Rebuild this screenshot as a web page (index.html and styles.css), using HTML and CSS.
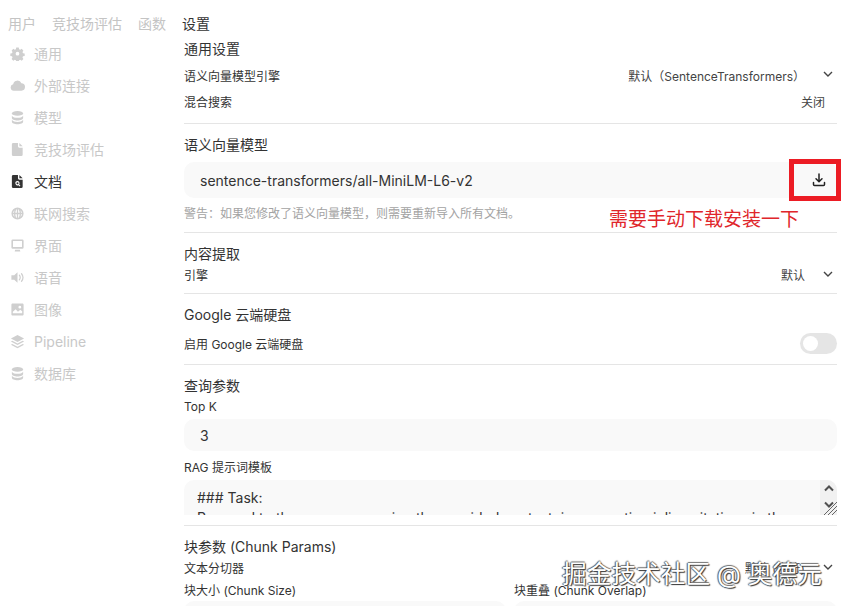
FILE: index.html
```html
<!DOCTYPE html>
<html lang="zh">
<head>
<meta charset="utf-8">
<title>设置</title>
<link rel="stylesheet" href="styles.css">
</head>
<body>
<div class="page">
  <nav class="tabs">
    <span class="tab">用户</span><span class="tab">竞技场评估</span><span class="tab">函数</span><span class="tab active">设置</span>
  </nav>
  <div class="body">
    <aside class="side">
      <div class="item"><svg class="ico" viewBox="0 0 16 16"><path fill-rule="evenodd" d="M6.500 1h3l.4 2 1.300.6 1.800-1.100 2 2.100-1.100 1.700.6 1.300 2 .4v3l-2 .4-.6 1.300 1.100 1.700-2 2.100-1.800-1.100-1.300.6-.4 2h-3l-.4-2-1.300-.6-1.800 1.100-2-2.100 1.100-1.700-.6-1.300-2-.4v-3l2-.4.6-1.300-1.100-1.700 2-2.100 1.800 1.100 1.300-.6zM8 6a2.200 2.200 0 1 0 0 4.400A2.200 2.200 0 0 0 8 6z" transform="translate(.8 .8) scale(.9)"/></svg><span>通用</span></div>
      <div class="item"><svg class="ico" viewBox="0 0 16 16"><path d="M4 13.500a3.500 3.500 0 0 1-.6-6.900 4.600 4.600 0 0 1 8.800-.9A3.900 3.900 0 0 1 12 13.500z"/></svg><span>外部连接</span></div>
      <div class="item"><svg class="ico" viewBox="0 0 16 16"><ellipse cx="8" cy="3.600" rx="6" ry="2.600"/><path d="M2 6c1 1.600 3.400 2.300 6 2.300S13 7.600 14 6v2.500c0 1.500-2.700 2.700-6 2.700S2 10 2 8.500zM2 10.500c1 1.600 3.400 2.300 6 2.300s5-.7 6-2.300V12.500c0 1.500-2.700 2.700-6 2.700s-6-1.200-6-2.700z"/></svg><span>模型</span></div>
      <div class="item"><svg class="ico" viewBox="0 0 16 16"><path d="M3.500 1h5v3.500a1.500 1.500 0 0 0 1.500 1.500h3.500v7.500A1.500 1.500 0 0 1 12 15H3.500A1.500 1.500 0 0 1 2 13.500v-11A1.500 1.500 0 0 1 3.500 1z"/><path d="M10 1l3.500 3.500H10z"/></svg><span>竞技场评估</span></div>
      <div class="item current"><svg class="ico" viewBox="0 0 16 16"><path fill-rule="evenodd" d="M3.500 1h5v3.500a1.500 1.500 0 0 0 1.500 1.500h3.500v7.500A1.500 1.500 0 0 1 12 15H3.500A1.500 1.500 0 0 1 2 13.500v-11A1.500 1.500 0 0 1 3.500 1zM8 7.500a2.300 2.300 0 1 0 1 4.400l1.300 1.300.8-.8-1.300-1.300A2.300 2.300 0 0 0 8 7.500zm0 1.200a1.100 1.100 0 1 1 0 2.200 1.100 1.100 0 0 1 0-2.200z"/><path d="M10 1l3.500 3.500H10z"/></svg><span>文档</span></div>
      <div class="item"><svg class="ico" viewBox="0 0 16 16"><path fill-rule="evenodd" d="M8 1.500a6.500 6.500 0 1 1 0 13 6.500 6.500 0 0 1 0-13zM7.300 3.200C6.300 4 5.800 5.700 5.700 7.300h1.600zM8.700 3.200v4.100h1.600c-.1-1.600-.6-3.300-1.600-4.100zM5.700 8.700c.1 1.600.6 3.300 1.600 4.100V8.700zM8.700 8.700v4.100c1-.8 1.500-2.500 1.600-4.100zM4.300 7.300c0-1 .2-2 .6-2.800a5 5 0 0 0-1.700 2.800zM11.700 7.300h1.100a5 5 0 0 0-1.700-2.800c.4.800.6 1.800.6 2.800zM3.200 8.700a5 5 0 0 0 1.700 2.800c-.4-.8-.6-1.800-.6-2.800zM12.800 8.700h-1.100c0 1-.2 2-.6 2.800a5 5 0 0 0 1.700-2.800z"/></svg><span>联网搜索</span></div>
      <div class="item"><svg class="ico" viewBox="0 0 16 16"><path fill-rule="evenodd" d="M3 1.500h10A1.500 1.500 0 0 1 14.500 3v7a1.500 1.500 0 0 1-1.500 1.500H3A1.500 1.500 0 0 1 1.500 10V3A1.500 1.500 0 0 1 3 1.500zm.2 1.700v6.500h9.600V3.200z"/><path d="M5.500 12.500h5l.5 2H5z"/></svg><span>界面</span></div>
      <div class="item"><svg class="ico" viewBox="0 0 16 16"><path d="M8 2.500v11L4.500 10.500H1.500v-5h3z"/><path d="M10 5.500c1 1.400 1 3.600 0 5M12.300 4c1.800 2.300 1.800 5.700 0 8" fill="none" stroke="currentColor" stroke-width="1.300" stroke-linecap="round"/></svg><span>语音</span></div>
      <div class="item"><svg class="ico" viewBox="0 0 16 16"><path fill-rule="evenodd" d="M2.800 1.500h10.400c.7 0 1.300.6 1.300 1.300v10.400c0 .7-.6 1.300-1.300 1.300H2.800c-.7 0-1.300-.6-1.300-1.300V2.800c0-.7.600-1.300 1.300-1.300zM10.500 4a1.500 1.500 0 1 0 0 3 1.500 1.500 0 0 0 0-3zM3 10.500v1.500h10V9.800l-2-1.500-2.500 2-2.500-2.600z"/></svg><span>图像</span></div>
      <div class="item"><svg class="ico" viewBox="0 0 16 16"><path d="M8 1l7 3.700-7 3.700-7-3.700z"/><path d="M2.500 7.300L8 10.200l5.500-2.900L15 8l-7 3.700L1 8z"/><path d="M2.500 10.600L8 13.500l5.500-2.900 1.500.8L8 15.100 1 11.400z"/></svg><span>Pipeline</span></div>
      <div class="item"><svg class="ico" viewBox="0 0 16 16"><ellipse cx="8" cy="3.600" rx="6" ry="2.600"/><path d="M2 6c1 1.600 3.400 2.300 6 2.300S13 7.600 14 6v2.500c0 1.500-2.700 2.700-6 2.700S2 10 2 8.500zM2 10.500c1 1.600 3.400 2.300 6 2.300s5-.7 6-2.300V12.500c0 1.500-2.700 2.700-6 2.700s-6-1.200-6-2.700z"/></svg><span>数据库</span></div>
    </aside>
    <main class="main">
      <section class="sec first">
        <h3>通用设置</h3>
        <div class="row h26"><span>语义向量模型引擎</span><span class="val">默认（SentenceTransformers）<svg class="chev" viewBox="0 0 12 12"><path d="M2 4l4 4 4-4"/></svg></span></div>
        <div class="row h26"><span>混合搜索</span><span class="val plain">关闭</span></div>
      </section>
      <section class="sec model">
        <h3>语义向量模型</h3>
        <div class="field big"><span>sentence-transformers/all-MiniLM-L6-v2</span><svg class="dl" viewBox="0 0 16 16"><path d="M8 2v7.500M5 6.800l3 3 3-3"/><path d="M2.500 10.500v2a1 1 0 0 0 1 1h9a1 1 0 0 0 1-1v-2"/></svg></div>
        <p class="warn">警告：如果您修改了语义向量模型，则需要重新导入所有文档。</p>
      </section>
      <section class="sec engine">
        <h3>内容提取</h3>
        <div class="row h21"><span>引擎</span><span class="val">默认<svg class="chev" viewBox="0 0 12 12"><path d="M2 4l4 4 4-4"/></svg></span></div>
      </section>
      <section class="sec">
        <h3>Google 云端硬盘</h3>
        <div class="row gdrive"><span>启用 Google 云端硬盘</span><span class="switch"><i></i></span></div>
      </section>
      <section class="sec params">
        <h3>查询参数</h3>
        <div class="lab">Top K</div>
        <div class="field num">3</div>
        <div class="lab rag">RAG 提示词模板</div>
        <div class="area">
          <div class="area-text">### Task:<br>Respond to the user query using the provided context, incorporating inline citations in the</div>
          <div class="spin"><svg viewBox="0 0 12 12"><path d="M2 7.500L6 3.500l4 4"/></svg><svg viewBox="0 0 12 12"><path d="M2 4.500l4 4 4-4"/></svg></div>
          <svg class="grip" viewBox="0 0 14 14"><path d="M14 1L1 14M14 5L5 14M14 9l-5 5"/></svg>
        </div>
      </section>
      <section class="sec chunk">
        <h3>块参数 (Chunk Params)</h3>
        <div class="row h21"><span>文本分切器</span><span class="val">默认 (字符)<svg class="chev" viewBox="0 0 12 12"><path d="M2 4l4 4 4-4"/></svg></span></div>
        <div class="cols">
          <div><div class="lab">块大小 (Chunk Size)</div><div class="field num"></div></div>
          <div><div class="lab">块重叠 (Chunk Overlap)</div><div class="field num"></div></div>
        </div>
      </section>
    </main>
  </div>
  <div class="redbox"></div>
  <div class="note">需要手动下载安装一下</div>
  <div class="mark">掘金技术社区 @ 奥德元</div>
</div>
</body>
</html>
```
FILE: styles.css
```css
* { box-sizing: border-box; }
html, body { margin: 0; padding: 0; background: #fff; }
body { font-family: Inter, "Noto Sans CJK SC", sans-serif; color: #333; }
.page { position: relative; width: 841px; height: 606px; overflow: hidden; }

.tabs { display: flex; gap: 16px; height: 37px; padding: 14px 0 0 8px; font-size: 14px; line-height: 20px; color: #c4c4c4; }
.tab.active { color: #333; }

.body { display: flex; }
.side { width: 184px; flex: none; padding-left: 10px; }
.item { display: flex; align-items: center; height: 32px; gap: 9px; font-size: 14px; color: #c8c8c8; }
.item.current { color: #333; }
.ico { width: 15px; height: 15px; fill: currentColor; color: #cfcfcf; flex: none; }
.item.current .ico { color: #333; }
.item span { white-space: nowrap; }

.main { width: 653px; flex: none; margin-top: -37px; padding-top: 38px; }
.sec { border-top: 1px solid #e5e5e5; padding-top: 11px; padding-bottom: 9px; }
.sec.first { border-top: 0; padding-top: 0; padding-bottom: 9px; margin-top: 1px; }
h3 { margin: 0; font-size: 14px; font-weight: 400; line-height: 20px; color: #333; }
.row { display: flex; justify-content: space-between; align-items: center; font-size: 12px; color: #333; }
.h26 { height: 26px; }
.first h3 + .row { margin-top: 3px; }
.h21 { height: 21px; }
.engine { padding-bottom: 8px; }
.val { display: flex; align-items: center; color: #444; }
.val.plain { padding-right: 12px; }
.chev { width: 12px; height: 12px; margin-left: 17px; margin-right: 3px; margin-top: -2px; fill: none; stroke: #444; stroke-width: 1.4; }

.model { padding-bottom: 10px; }
.field { background: #f9f9f9; border-radius: 10px; font-size: 14px; color: #333; }
.field.big { height: 36px; margin-top: 7px; padding: 1px 16px 0; display: flex; align-items: center; justify-content: space-between; }
.dl { position: relative; left: 6px; top: -1px; width: 16px; height: 16px; fill: none; stroke: #222; stroke-width: 1.5; stroke-linecap: round; stroke-linejoin: round; }
.warn { margin: 8px 0 0; font-size: 12px; line-height: 16px; color: #a3a3a3; white-space: nowrap; }

.gdrive { height: 24px; margin-top: 6px; }
.switch { display: block; width: 37px; height: 21px; border-radius: 11px; background: #e5e5e5; padding: 3px; }
.switch i { display: block; width: 15px; height: 15px; border-radius: 50%; background: #fff; }

.params { padding-bottom: 0; }
.lab { font-size: 12px; line-height: 18px; margin-top: 2px; color: #333; }
.field.num { height: 32px; margin-top: 3px; padding: 0 16px; line-height: 34px; }
.lab.rag { margin-top: 8px; }
.area { position: relative; height: 35px; margin-top: 3px; background: #f9f9f9; border-radius: 10px 10px 0 0; overflow: hidden; padding: 8px 16px 0 13px; font-size: 14px; line-height: 20px; }
.area-text { white-space: nowrap; width: 622px; overflow: hidden; }
.spin { position: absolute; right: 0; top: 0; width: 17px; height: 35px; background: #f1f1f1; display: flex; flex-direction: column; align-items: center; padding-top: 3px; gap: 3px; }
.spin svg { width: 12px; height: 12px; fill: none; stroke: #505050; stroke-width: 2; }
.grip { position: absolute; right: 0; bottom: 0; width: 14px; height: 14px; fill: none; stroke: #666; stroke-width: 1; }

.chunk { margin-top: 10px; padding-top: 11px; }
.cols { display: grid; grid-template-columns: 322px 323px; gap: 8px; }
.chunk .lab { margin-top: 4px; }
.chunk .field.num { margin-top: 1px; }

.redbox { position: absolute; left: 789px; top: 159px; width: 52px; height: 42px; border: 5px solid #ec1c24; }
.note { position: absolute; left: 609px; top: 207px; font-size: 19px; line-height: 26px; color: #e0262b; white-space: nowrap; }
.mark { position: absolute; left: 562px; top: 558px; font-size: 24.7px; line-height: 32px; color: #fff; white-space: nowrap; text-shadow: 1px 1px 1px #333, -1px 0 1px #555, 0 -1px 1px #777; }
```
